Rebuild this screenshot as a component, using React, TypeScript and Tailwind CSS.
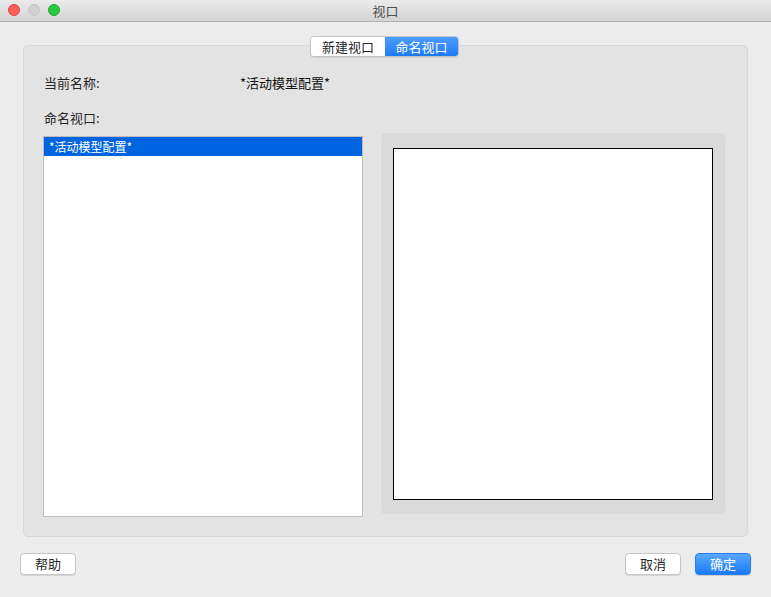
import React from "react";

const font = { fontFamily: '"Noto Sans CJK SC", "Noto Sans", sans-serif' };

function TrafficLights() {
  return (
    <div className="absolute left-[8px] top-[4px] flex gap-[8px]">
      <span className="h-[12px] w-[12px] rounded-full border border-[#e2463f] bg-[#fe5f57]" />
      <span className="h-[12px] w-[12px] rounded-full border border-[#c4c4c4] bg-[#d0d0d0]" />
      <span className="h-[12px] w-[12px] rounded-full border border-[#1aab29] bg-[#28c840]" />
    </div>
  );
}

function Button({ label, primary }: { label: string; primary?: boolean }) {
  return (
    <button
      className={
        primary
          ? "h-[22px] w-[56px] rounded-[4px] border border-[#2a7ef0] bg-gradient-to-b from-[#5aa7fd] to-[#157af6] text-[13px] text-white shadow-[0_1px_1px_rgba(0,0,0,0.15)]"
          : "h-[22px] w-[56px] rounded-[4px] border border-[#c6c6c6] bg-white text-[13px] text-[#262626] shadow-[0_1px_1px_rgba(0,0,0,0.1)]"
      }
    >
      {label}
    </button>
  );
}

export default function App() {
  return (
    <div className="flex h-[597px] w-[771px] flex-col bg-[#ececec] text-[12px] text-[#262626]" style={font}>
      <div className="relative flex h-[22px] items-center justify-center border-b border-[#b1b1b1] bg-gradient-to-b from-[#ebebeb] to-[#d4d4d4]">
        <TrafficLights />
        <span className="text-[13px] text-[#4d4d4d]">视口</span>
      </div>

      <div className="flex flex-col px-[23px] pt-[14px]">
        <div className="relative z-10 mb-[-12px] flex justify-center pr-[2px]">
          <div className="flex h-[21px] overflow-hidden rounded-[4px] border border-[#c4c4c4] shadow-[0_1px_1px_rgba(0,0,0,0.08)]">
            <div className="flex w-[74px] items-center justify-center bg-white text-[13px] text-[#262626]">新建视口</div>
            <div className="flex w-[73px] items-center justify-center bg-gradient-to-b from-[#4c9cfd] to-[#1a7bf6] text-[13px] text-white">命名视口</div>
          </div>
        </div>

        <div className="flex h-[492px] flex-col rounded-[5px] border border-[#d8d8d8] bg-[#e3e3e3] pl-[19px] pr-[22px] pt-[28px]">
          <div className="flex h-[17px] items-center text-[13px]">
            <span className="w-[197px] pl-[1px]">当前名称:</span>
            <span className="text-[#111]">*活动模型配置*</span>
          </div>
          <div className="mt-[18px] flex h-[17px] items-center pl-[1px] text-[13px]">命名视口:</div>
          <div className="mt-[7px] flex gap-[18px]">
            <div className="mt-[3px] h-[381px] w-[320px] border border-[#bdbdbd] bg-white">
              <div className="flex h-[19px] items-center bg-[#0064e1] pl-[5px] text-white">*活动模型配置*</div>
            </div>
            <div className="h-[381px] flex-1 rounded-[4px] bg-[#dadada] pl-[12px] pr-[12px] pt-[15px]">
              <div className="h-[352px] border border-black bg-white" />
            </div>
          </div>
        </div>
      </div>

      <div className="mt-[16px] flex items-center px-[20px]">
        <Button label="帮助" />
        <div className="flex-1" />
        <div className="flex gap-[14px]">
          <Button label="取消" />
          <Button label="确定" primary />
        </div>
      </div>
    </div>
  );
}
